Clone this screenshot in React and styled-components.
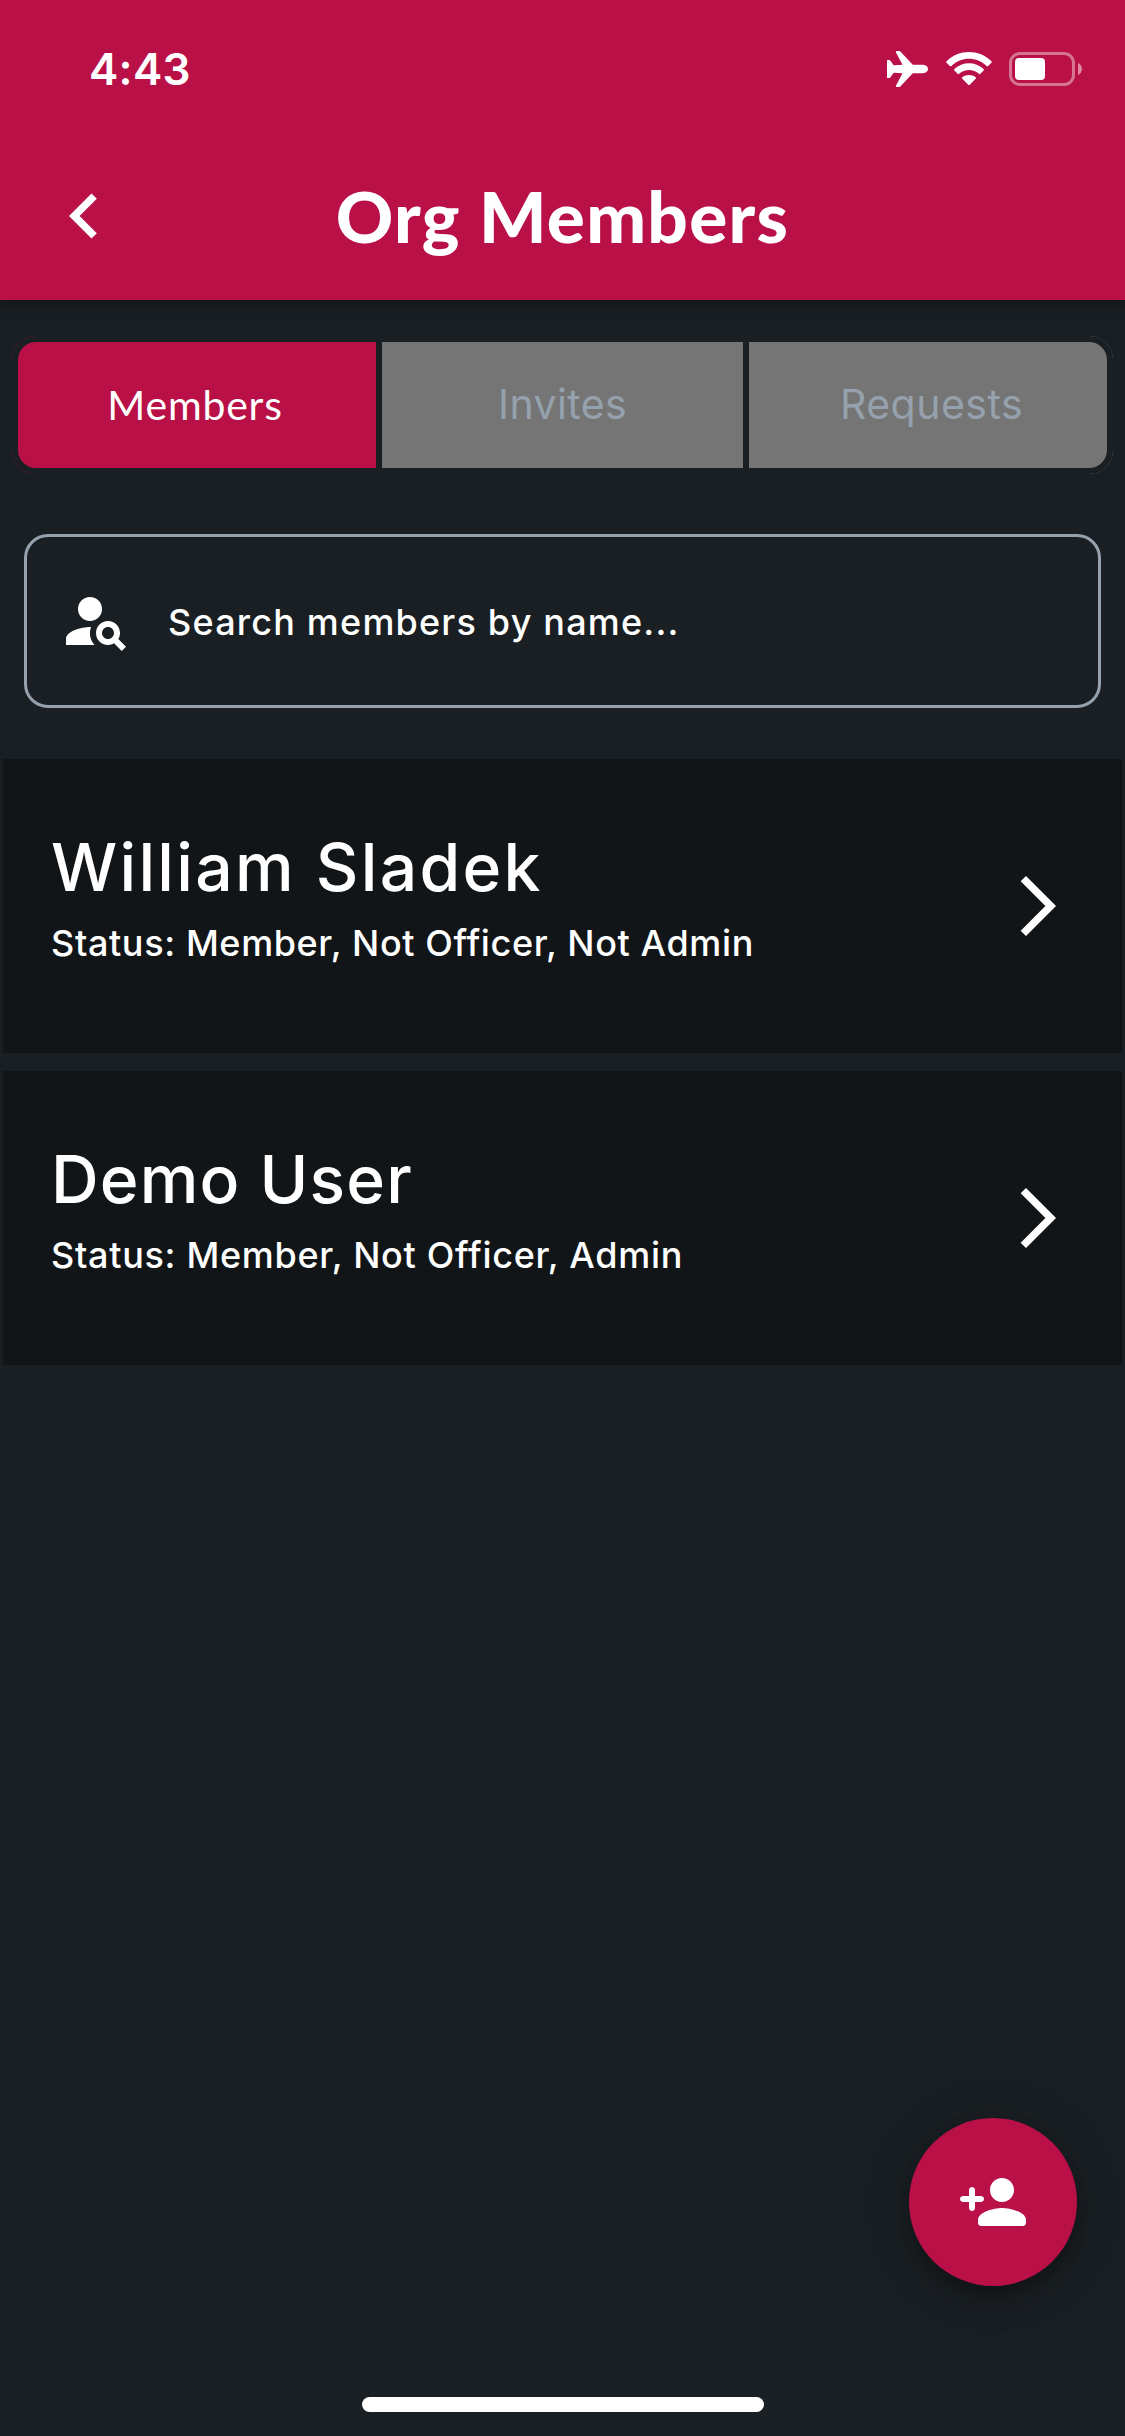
import React from 'react';
import styled, { createGlobalStyle } from 'styled-components';

const color = {
  primary: '#b91047',
  background: '#1a1f23',
  card: '#121518',
  muted: '#757575',
  line: '#95a1ac',
  white: '#ffffff',
};
const geometric = "Lato, 'Open Sans', sans-serif";
const grotesque = "Inter, 'Liberation Sans', sans-serif";

const GlobalStyle = createGlobalStyle`
  * { box-sizing: border-box; }
  body { margin: 0; background: ${color.background}; }
`;

const Screen = styled.div`
  width: 1125px;
  height: 2436px;
  display: flex;
  flex-direction: column;
  overflow: hidden;
  background: ${color.background};
  color: ${color.white};
  font-family: ${grotesque};
`;

const Header = styled.header`
  height: 300px;
  flex: none;
  background: ${color.primary};
  box-shadow: 0 6px 12px rgba(0, 0, 0, 0.3);
`;

const StatusBar = styled.div`
  height: 132px;
  padding: 6px 42px 0 89px;
  display: flex;
  align-items: center;
  justify-content: space-between;
`;

const Time = styled.span`
  font-size: 44px;
  line-height: 54px;
  font-weight: 580;
  letter-spacing: 0.3px;
`;

const StatusIcons = styled.div`
  display: flex;
  align-items: center;
  gap: 17px;
  svg { display: block; }
`;

const AppBar = styled.div`
  height: 168px;
  padding: 0 39px;
  display: grid;
  grid-template-columns: 90px 1fr 90px;
  align-items: center;
`;

const BackButton = styled.button`
  width: 90px;
  height: 90px;
  padding: 0;
  border: 0;
  background: none;
  color: inherit;
  svg { display: block; }
`;

const Title = styled.h1`
  margin: 0;
  font-family: ${geometric};
  font-size: 71px;
  line-height: 86px;
  font-weight: 900;
  text-align: center;
  white-space: nowrap;
  letter-spacing: 1.3px;
`;

const Tabs = styled.nav`
  margin: 36px 12px 0;
  display: grid;
  grid-template-columns: 364px 367px 370px;
`;

const tabRadius = {
  first: (r) => `${r}px 0 0 ${r}px`,
  middle: () => '0',
  last: (r) => `0 ${r}px ${r}px 0`,
};

const tabPadding = {
  first: '0 4px 0 0',
  middle: '0 0 2px',
  last: '0 0 2px 7px',
};

const TabEdge = styled.div`
  height: 138px;
  border-radius: ${(p) => tabRadius[p.$place](24)};
  background: ${(p) => (p.$active ? color.primary : color.muted)};
`;

const TabFrame = styled.div`
  height: 138px;
  padding: 6px ${(p) => (p.$place === 'last' ? 6 : 0)}px 6px 6px;
  border-radius: ${(p) => tabRadius[p.$place](24)};
  background: ${color.background};
`;

const TabButton = styled.button`
  display: flex;
  align-items: center;
  justify-content: center;
  width: 100%;
  height: 126px;
  padding: ${(p) => tabPadding[p.$place]};
  border: 0;
  border-radius: ${(p) => tabRadius[p.$place](18)};
  background: ${(p) => (p.$active ? color.primary : color.muted)};
  color: ${(p) => (p.$active ? color.white : color.line)};
  font-family: ${(p) => (p.$active ? geometric : grotesque)};
  font-size: 41px;
  line-height: 50px;
  font-weight: 400;
  letter-spacing: ${(p) => p.$tracking}px;
`;

const SearchBox = styled.label`
  height: 174px;
  margin: 60px 24px 0;
  padding-left: 33px;
  display: flex;
  align-items: center;
  gap: 36px;
  border: 3px solid ${color.line};
  border-radius: 24px;
`;

const SearchText = styled.span`
  padding-top: 2px;
  font-size: 36px;
  line-height: 52px;
  font-weight: 450;
  letter-spacing: 1.2px;
`;

const MemberList = styled.main`
  margin: 51px 3px 0;
  display: flex;
  flex-direction: column;
  gap: 18px;
`;

const MemberCard = styled.article`
  height: 294px;
  padding: 0 48px;
  display: flex;
  align-items: center;
  justify-content: space-between;
  background: ${color.card};
  svg { display: block; }
`;

const MemberText = styled.div`
  padding-bottom: 20px;
  white-space: nowrap;
`;

const MemberName = styled.h2`
  margin: 0;
  font-size: 66px;
  line-height: 94px;
  font-weight: 480;
  letter-spacing: ${(p) => p.$tracking}px;
`;

const MemberStatus = styled.p`
  margin: 0;
  font-size: 36px;
  line-height: 58px;
  font-weight: 450;
  letter-spacing: ${(p) => p.$tracking}px;
`;

const Footer = styled.footer`
  margin-top: auto;
  padding-bottom: 24px;
  display: flex;
  flex-direction: column;
  align-items: center;
  gap: 111px;
`;

const AddButton = styled.button`
  width: 168px;
  height: 168px;
  margin-right: 48px;
  padding: 0;
  display: flex;
  align-items: center;
  justify-content: center;
  align-self: flex-end;
  border: 0;
  border-radius: 50%;
  background: ${color.primary};
  color: ${color.white};
  box-shadow: 0 9px 15px -3px rgba(0, 0, 0, 0.2), 0 18px 30px rgba(0, 0, 0, 0.14), 0 3px 54px rgba(0, 0, 0, 0.12);
`;

const HomeIndicator = styled.div`
  width: 402px;
  height: 15px;
  margin-left: 1px;
  border-radius: 8px;
  background: ${color.white};
`;

const Icon = ({ size, d }) => (
  <svg width={size} height={size} viewBox="0 0 24 24" fill="currentColor" aria-hidden="true">
    {[].concat(d).map((path) => <path key={path} d={path} />)}
  </svg>
);

const paths = {
  back: 'M15.41 7.41 14 6l-6 6 6 6 1.41-1.41L10.83 12z',
  forward: 'M6.23 20.23 8 22l10-10L8 2 6.23 3.77 14.46 12z',
  personSearch: [
    'M10 12c2.21 0 4-1.79 4-4s-1.79-4-4-4-4 1.79-4 4 1.79 4 4 4z',
    'M10.35 14.01C7.62 13.91 2 15.27 2 18v2h9.54c-2.47-2.76-1.23-5.89-1.19-5.99z',
    'M19.43 18.02c.36-.59.57-1.28.57-2.02 0-2.21-1.79-4-4-4s-4 1.79-4 4 1.79 4 4 4c.74 0 1.43-.22 2.02-.57L20.59 22 22 20.59l-2.57-2.57zM16 18c-1.1 0-2-.9-2-2s.9-2 2-2 2 .9 2 2-.9 2-2 2z',
  ],
  personAdd:
    'M15 12c2.21 0 4-1.79 4-4s-1.79-4-4-4-4 1.79-4 4 1.79 4 4 4zm-9-2V8c0-.55-.45-1-1-1s-1 .45-1 1v2H2c-.55 0-1 .45-1 1s.45 1 1 1h2v2c0 .55.45 1 1 1s1-.45 1-1v-2h2c.55 0 1-.45 1-1s-.45-1-1-1H6zm9 4c-2.67 0-8 1.34-8 4v1c0 .55.45 1 1 1h14c.55 0 1-.45 1-1v-1c0-2.66-5.33-4-8-4z',
};

const Airplane = () => (
  <svg width="42" height="36" viewBox="0 0 42 36" fill="#fff" aria-hidden="true">
    <path d="M0 9.5Q0 9 .6 9H2.2Q2.8 9 3.2 9.5L6.7 14.2 15.5 13.7 8.9 1.2Q8.5 0 9.7 0H12.2Q13 0 13.6.7L25.8 13.7H36Q41 14.6 41 18T36 22.3H25.8L13.6 35.3Q13 36 12.2 36H9.7Q8.5 36 8.9 34.8L15.5 22.3 6.7 21.8 3.2 26.5Q2.8 27 2.2 27H.6Q0 27 0 26.5V18Z" />
  </svg>
);

const Wifi = () => (
  <svg width="46" height="34" viewBox="0 0 46 34" fill="#fff" aria-hidden="true">
    <path d="M.6 9.2C13-3 33-3 45.4 9.2q.8.8 0 1.6l-3.2 3.1q-.8.7-1.6 0C30.5 4.2 15.5 4.2 5.4 13.9q-.8.7-1.6 0L.6 10.8q-.8-.8 0-1.6z" />
    <path d="M8.4 17C16.5 9.2 29.5 9.2 37.6 17q.8.8 0 1.6l-3.2 3.1q-.8.7-1.6 0C27.2 16.7 18.8 16.7 13.2 21.7q-.8.7-1.6 0L8.4 18.6q-.8-.8 0-1.6z" />
    <path d="M16.3 25.3c3.9-3 9.5-3 13.4 0q.8.7 0 1.5l-5.9 5.9q-.8.7-1.6 0l-5.9-5.9q-.8-.8 0-1.5z" />
  </svg>
);

const Battery = () => (
  <svg width="74" height="34" viewBox="0 0 74 34" aria-hidden="true">
    <rect x="1.5" y="1.5" width="63" height="31" rx="9.5" fill="none" stroke="#fff" strokeOpacity=".42" strokeWidth="3" />
    <rect x="6" y="6" width="30" height="22" rx="4" fill="#fff" />
    <path d="M69 11c5.3 2 5.3 10 0 12z" fill="#fff" fillOpacity=".5" />
  </svg>
);

const tabs = [
  { label: 'Members', place: 'first', active: true, tracking: 0.8 },
  { label: 'Invites', place: 'middle', tracking: 0.4 },
  { label: 'Requests', place: 'last', tracking: 0.5 },
];

const members = [
  { name: 'William Sladek', status: 'Status: Member, Not Officer, Not Admin', nameTracking: 2.3, statusTracking: 0.62 },
  { name: 'Demo User', status: 'Status: Member, Not Officer, Admin', nameTracking: 1.2, statusTracking: 0.69 },
];

export default function App() {
  return (
    <Screen>
      <GlobalStyle />
      <Header>
        <StatusBar>
          <Time>4:43</Time>
          <StatusIcons>
            <Airplane />
            <Wifi />
            <Battery />
          </StatusIcons>
        </StatusBar>
        <AppBar>
          <BackButton aria-label="Back"><Icon size={90} d={paths.back} /></BackButton>
          <Title>Org Members</Title>
        </AppBar>
      </Header>
      <Tabs>
        {tabs.map((t) => (
          <TabEdge key={t.label} $place={t.place} $active={t.active}>
            <TabFrame $place={t.place}>
              <TabButton $place={t.place} $active={t.active} $tracking={t.tracking}>{t.label}</TabButton>
            </TabFrame>
          </TabEdge>
        ))}
      </Tabs>
      <SearchBox>
        <Icon size={72} d={paths.personSearch} />
        <SearchText>Search members by name...</SearchText>
      </SearchBox>
      <MemberList>
        {members.map((m) => (
          <MemberCard key={m.name}>
            <MemberText>
              <MemberName $tracking={m.nameTracking}>{m.name}</MemberName>
              <MemberStatus $tracking={m.statusTracking}>{m.status}</MemberStatus>
            </MemberText>
            <Icon size={72} d={paths.forward} />
          </MemberCard>
        ))}
      </MemberList>
      <Footer>
        <AddButton aria-label="Add member"><Icon size={72} d={paths.personAdd} /></AddButton>
        <HomeIndicator />
      </Footer>
    </Screen>
  );
}
